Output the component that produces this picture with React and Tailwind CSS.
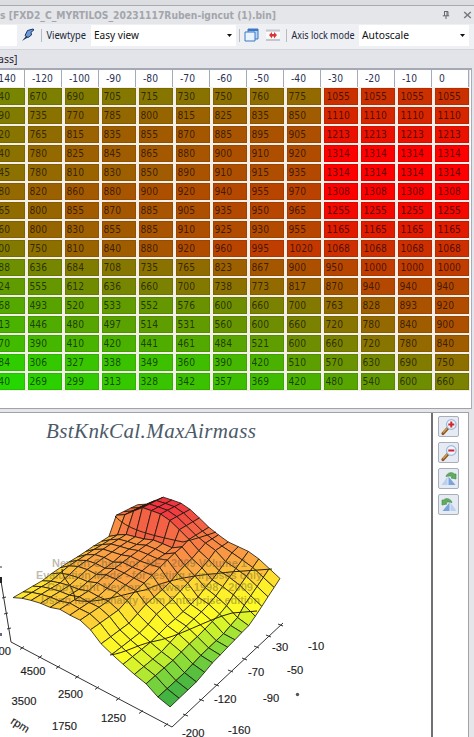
const columns = ['-140', '-120', '-100', '-90', '-80', '-70', '-60', '-50', '-40', '-30', '-20', '-10', '0'];

const rows = [
  [640, 670, 690, 705, 715, 730, 750, 760, 775, 1055, 1055, 1055, 1055],
  [690, 735, 770, 785, 800, 815, 825, 835, 850, 1110, 1110, 1110, 1110],
  [720, 765, 815, 835, 855, 870, 885, 895, 905, 1213, 1213, 1213, 1213],
  [740, 780, 825, 845, 865, 880, 900, 910, 920, 1314, 1314, 1314, 1314],
  [745, 780, 810, 830, 850, 890, 910, 915, 935, 1314, 1314, 1314, 1314],
  [780, 820, 860, 880, 900, 920, 940, 955, 970, 1308, 1308, 1308, 1308],
  [765, 800, 855, 870, 885, 905, 935, 950, 965, 1255, 1255, 1255, 1255],
  [760, 800, 830, 855, 885, 910, 925, 930, 955, 1165, 1165, 1165, 1165],
  [700, 750, 810, 840, 880, 920, 960, 995, 1020, 1068, 1068, 1068, 1068],
  [588, 636, 684, 708, 735, 765, 823, 867, 900, 950, 1000, 1000, 1000],
  [524, 555, 612, 636, 660, 700, 738, 773, 817, 870, 940, 940, 940],
  [468, 493, 520, 533, 552, 576, 600, 660, 700, 763, 828, 893, 920],
  [413, 446, 480, 497, 514, 531, 560, 600, 660, 720, 780, 840, 900],
  [370, 390, 410, 420, 441, 461, 484, 521, 600, 660, 720, 780, 840],
  [284, 306, 327, 338, 349, 360, 390, 420, 510, 570, 630, 690, 750],
  [240, 269, 299, 313, 328, 342, 357, 369, 420, 480, 540, 600, 660],
];

const cellColor = (v) => {
  const r = Math.min(255, Math.round((v / 1314) * 265 - 10));
  return `rgb(${r}, ${Math.max(0, 252 - r)}, 0)`;
};

// 3D surface: the three columns left of -140 continue the first one
const surface = rows.map((r) => [r[0] - 18, r[0] - 12, r[0] - 6, ...r]);

const stops = [
  [240, [62, 176, 66]],
  [330, [132, 218, 58]],
  [410, [208, 242, 44]],
  [485, [253, 253, 36]],
  [640, [254, 236, 44]],
  [740, [252, 200, 56]],
  [850, [250, 164, 68]],
  [980, [248, 134, 68]],
  [1120, [244, 98, 70]],
  [1314, [240, 52, 64]],
];

const surfaceColor = (v) => {
  for (let k = 1; k < stops.length; k++) {
    if (v <= stops[k][0]) {
      const [a, ca] = stops[k - 1];
      const [b, cb] = stops[k];
      const t = Math.max(0, (v - a) / (b - a));
      return `rgb(${ca.map((c, n) => Math.round(c + (cb[n] - c) * t)).join(',')})`;
    }
  }
  return 'rgb(240,52,64)';
};

// Perspective of the floor plane, u runs along rpm and v along degrees
const project = (i, j) => {
  const u = 0.985 - (i / 15) * 0.975;
  const v = (j / 15) * 0.985;
  const w = 1 + u * 0.18 + v * 0.26;
  const x = (172 + u * (1.18 * 11 - 172) + v * (1.26 * 283 - 172)) / w;
  const y = (727 + u * (1.18 * 642 - 727) + v * (1.26 * 623 - 727) - surface[i][j] * 0.086) / w;
  return [x, y - 413];
};

const quads = [];
for (let j = 14; j >= 0; j--) {
  for (let i = 0; i < 15; i++) {
    const pts = [project(i, j), project(i + 1, j), project(i + 1, j + 1), project(i, j + 1)];
    const avg = (surface[i][j] + surface[i + 1][j] + surface[i + 1][j + 1] + surface[i][j + 1]) / 4;
    quads.push({ key: `${i}-${j}`, points: pts.map((p) => p.map((n) => n.toFixed(1)).join(',')).join(' '), fill: surfaceColor(avg) });
  }
}

const rpmTicks = [[22, 648], [40, 657], [58, 667], [77, 677], [97, 688], [118, 699], [141, 712], [166, 725]];
const degTicks = [[186, 715], [202, 700], [217, 685], [231, 671], [245, 659], [257, 647], [269, 636], [281, 625]];

const axisLabels = [
  ['5500', -14, 655], ['4500', 20.5, 675], ['2500', 58, 697.5], ['1250', 101, 722],
  ['3500', 11.5, 705], ['1750', 52, 730], ['-30', 272, 650.5], ['-10', 308, 649.5],
  ['-70', 248, 676], ['-50', 287, 674], ['-120', 214, 703], ['-90', 263, 702],
  ['-200', 182, 736.5], ['-160', 228, 733.5],
];

const watermark = [
  ['Nevron Chart for .NET 2009 Volume 1', 52, 566.5, 195],
  ['Evaluation Mode - for testing purposes only', 36, 579, 226],
  ['Copyright Nevron Software 1998 - 2009', 47, 591, 206],
  ['Using functionality from Enterprise edition', 41, 603.5, 219],
];

function Chart() {
  return (
    <svg width="431" height="324" className="block overflow-hidden">
      <text x="46" y="25" textLength="210" fontSize="21" fontStyle="italic" fill="#4b5a68" fontFamily="'Liberation Serif', serif">
        BstKnkCal.MaxAirmass
      </text>
      <g stroke="#1a1408" strokeWidth="0.8" strokeLinejoin="round">
        {quads.map((q) => (
          <polygon key={q.key} points={q.points} fill={q.fill} />
        ))}
      </g>
      <g transform="translate(0 -413)" fill="none">
        <g stroke="#2a2108" strokeWidth="1">
          <path d="M110 655C125 653 137 645 151 642C180 637 205 620 232 613L257 611" />
          <path d="M62 569C62 580 74 585 75 600C95 605 123 594 145 590C176 576 205 575 230 572L272 569" />
          <path d="M115 516C127 529 145 534 183 542C195 539 205 536 216 532" />
        </g>
        <g stroke="#333" strokeWidth="1">
          <path d="M1 581L11 642L172 727L283 623" />
          <path d="M2 598L6 597M4 614L8 613M7 629L11 628M0 567H2" />
          {rpmTicks.map(([x, y]) => (
            <path key={x} d={`M${x - 2} ${y + 1.5}L${x + 2} ${y - 1.5}`} />
          ))}
          {degTicks.map(([x, y]) => (
            <path key={x} d={`M${x - 3} ${y - 1}L${x + 2} ${y + 1}`} />
          ))}
        </g>
        <path d="M0 577H2V583H0Z" fill="#222" />
        <path d="M0 633H2V636H0Z" fill="#668" />
        <g fontFamily="'Liberation Sans', Arial, sans-serif" fontSize="11.2" fill="#1c1c1c" stroke="#1c1c1c" strokeWidth="0.15">
          {axisLabels.map(([t, x, y]) => (
            <text key={t} x={x} y={y}>{t}</text>
          ))}
          <text transform="translate(10 723) rotate(32)">rpm</text>
        </g>
        <circle cx="297.5" cy="694.5" r="1.7" fill="#555" />
        <g fontFamily="'Liberation Sans', Arial, sans-serif" fontSize="10.5" fontWeight="bold" fill="#6b5a3a" fillOpacity="0.42">
          {watermark.map(([t, x, y, w]) => (
            <text key={t} x={x} y={y} textLength={w} lengthAdjust="spacingAndGlyphs">{t}</text>
          ))}
        </g>
      </g>
    </svg>
  );
}

function ZoomIcon({ plus }) {
  return (
    <svg width="18" height="18" viewBox="0 0 18 18">
      <path d="M3 15.5L8 10" stroke="#8b5a24" strokeWidth="3.2" strokeLinecap="round" />
      <path d="M3.2 14.6L7 10.4" stroke="#e2a14c" strokeWidth="1.3" />
      <circle cx="11.3" cy="6.5" r="4.8" fill="#eef5fd" stroke="#9dbbdc" strokeWidth="1.2" />
      <path d={plus ? 'M8.3 6.5H14.3M11.3 3.5V9.5' : 'M8.3 6.5H14.3'} stroke="#d3262c" strokeWidth="2" />
    </svg>
  );
}

function RotateIcon({ flip }) {
  return (
    <svg width="18" height="18" viewBox="0 0 18 18" className={flip ? '-scale-x-100' : ''}>
      <path d="M1.5 15L7.5 6.5V15Z" fill="#b9d0f0" />
      <path d="M8.5 15V6.5L15.5 15Z" fill="#7ba4dc" />
      <path d="M6 6.5C7 2.5 12 1.500 14.500 4L16 4V9L11 8L12.500 6.800C10.500 5.500 8.500 6 6 6.500Z" fill="#62ad5c" stroke="#3a8746" strokeWidth="0.6" />
    </svg>
  );
}

const Separator = () => <div className="w-px h-[13px] bg-[#b9bbc2]" />;

const Arrow = () => (
  <svg width="5" height="3" viewBox="0 0 5 3">
    <path d="M0 0H5L2.5 3Z" fill="#111" />
  </svg>
);

export default function App() {
  return (
    <div className="w-[474px] h-[737px] overflow-hidden flex flex-col bg-[#e5e6ea] font-['Noto_Sans','Open_Sans',sans-serif] text-[#1f2330] whitespace-nowrap">
      <div className="h-[6px] shrink-0 bg-[#dcdde1] border-b border-[#a9aab0]" />

      {/* Title bar */}
      <div className="h-[18px] shrink-0 flex items-center justify-between pr-[2px]">
        <svg width="290" height="18">
          <text x="0" y="12.5" textLength="276" lengthAdjust="spacingAndGlyphs" fontSize="10.5" fontWeight="bold" fill="#a3a5ac" fontFamily="'DejaVu Sans Condensed', 'DejaVu Sans', sans-serif">
            s [FXD2_C_MYRTILOS_20231117Ruben-igncut (1).bin]
          </text>
        </svg>
        <div className="flex items-center gap-[13px]">
          <svg width="8" height="8" viewBox="0 0 8 8" fill="none" stroke="#666870">
            <path d="M2 .5H6V4.5M2.5 0V5M5 0V5M.8 4.8H7.2M4 5V8" />
          </svg>
          <svg width="9" height="8" viewBox="0 0 9 8" fill="none" stroke="#777980" strokeWidth="1.5">
            <path d="M1.2 1L7.8 7M7.8 1L1.2 7" />
          </svg>
        </div>
      </div>

      {/* Toolbar */}
      <div className="h-[26px] shrink-0 flex items-center bg-[#eff0f3] border-b border-[#d3d5da] pb-[3px]">
        <div className="w-[17px] h-[21px] bg-white" />
        <svg width="14" height="14" viewBox="0 0 14 14" className="ml-1">
          <path d="M1 13L5.5 7.5L7.5 9Z" fill="#253a63" />
          <path d="M4 7.5L6.5 2.5L12 1L13 1.8L10 4.3L10.5 7L7 9.5Z" fill="#6b9bd8" stroke="#1d3564" strokeWidth="1" />
        </svg>
        <div className="ml-[6px]"><Separator /></div>
        <svg width="49" height="18">
          <text x="4.5" y="12.5" textLength="39.5" lengthAdjust="spacingAndGlyphs" fontSize="10.5" fill="#20263a">Viewtype</text>
        </svg>
        <div className="w-[145px] h-[21px] bg-white flex items-center justify-between pr-1">
          <svg width="60" height="18">
            <text x="3" y="12.5" textLength="45" lengthAdjust="spacingAndGlyphs" fontSize="11" fill="#111">Easy view</text>
          </svg>
          <Arrow />
        </div>
        <div className="ml-[3px]"><Separator /></div>
        <svg width="15" height="14" viewBox="0 0 15 14" className="ml-1">
          <path d="M4 1H14V11H4Z" fill="#b9d5f4" stroke="#3d78c4" />
          <path d="M4 1H14V3H4Z" fill="#3d78c4" />
          <path d="M1 4H11V13H1Z" fill="#e9f3fd" stroke="#3d78c4" />
        </svg>
        <svg width="14" height="14" viewBox="0 0 14 14" className="ml-[7px]">
          <path d="M0 1.5H14V3.5H0ZM0 11H14V13H0Z" fill="#c4c6cb" />
          <path d="M0 4H14V10.5H0Z" fill="#fafafb" />
          <path d="M3 7L6 4V6H8V4L11 7L8 10.5V8.5H6V10.5Z" fill="#dc3434" />
        </svg>
        <div className="ml-[6px]"><Separator /></div>
        <svg width="72" height="18">
          <text x="4.5" y="12.5" textLength="63" lengthAdjust="spacingAndGlyphs" fontSize="10.5" fill="#20263a">Axis lock mode</text>
        </svg>
        <div className="w-[110px] h-[21px] bg-white flex items-center justify-between pr-1">
          <svg width="60" height="18">
            <text x="3" y="12.5" textLength="47" lengthAdjust="spacingAndGlyphs" fontSize="11" fill="#111">Autoscale</text>
          </svg>
          <Arrow />
        </div>
      </div>

      {/* Map caption */}
      <div className="h-[18px] shrink-0 bg-[#e3e4e9] text-[10.5px] leading-[19px]">
        <div className="-ml-[2px]">ass]</div>
      </div>

      {/* Map values */}
      <div className="w-[472px] h-[341px] shrink-0 overflow-hidden bg-white border-t-2 border-t-[#a5a9b4] border-b border-b-[#a0a2a8] border-r border-r-[#a9adbb] font-['DejaVu_Sans_Condensed','DejaVu_Sans',sans-serif] text-[10.2px]">
        <div className="-ml-[12px] w-[482px] flex h-[17px]">
          {columns.map((c) => (
            <div key={c} className="w-[37px] shrink-0 border-r border-[#a3abba] bg-white text-[#293052] leading-[18px] pl-[7px] shadow-[1px_0_0_#dde2ec]">
              {c}
            </div>
          ))}
        </div>
        <div className="-ml-[12px] w-[482px] h-[303.5px] flex flex-col bg-[#f4efe9]">
          {rows.map((r, i) => (
            <div key={i} className="flex flex-1 min-h-0 gap-[3px] pt-px pb-px pl-[3px]">
              {r.map((v, j) => (
                <div
                  key={j}
                  className={`w-[34px] shrink-0 text-black/65 leading-[15px] border border-black/10 ${v >= 1000 ? 'pl-[1.5px]' : 'pl-[0.5px]'}`}
                  style={{ backgroundColor: cellColor(v) }}
                >
                  {v}
                </div>
              ))}
            </div>
          ))}
        </div>
      </div>

      {/* Chart panel */}
      <div className="mt-[3px] w-[469px] h-[325px] shrink-0 flex bg-white border-t border-r border-[#a0a2a8]">
        <div className="w-[433px] border-r-2 border-[#707074] overflow-hidden">
          <Chart />
        </div>
        <div className="flex flex-col gap-[5px] pt-[3px] pl-[5px]">
          {[<ZoomIcon plus key="i" />, <ZoomIcon key="o" />, <RotateIcon key="r" />, <RotateIcon flip key="l" />].map((icon, i) => (
            <button key={i} className="w-[21px] h-[21px] flex items-center justify-center rounded-[2px] border border-[#a9aebb] bg-[#e6eaf2]">
              {icon}
            </button>
          ))}
        </div>
      </div>
    </div>
  );
}
